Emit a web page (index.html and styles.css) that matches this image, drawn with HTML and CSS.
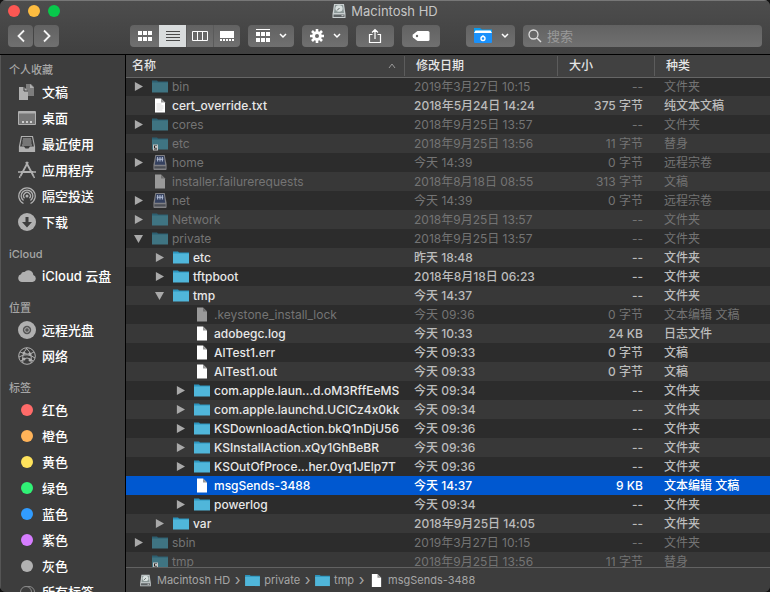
FILE: index.html
```html
<!DOCTYPE html>
<html lang="zh-CN">
<head>
<meta charset="utf-8">
<title>Macintosh HD</title>
<link rel="stylesheet" href="styles.css">
</head>
<body>
<svg class="sprite" aria-hidden="true">
  <symbol id="folder" viewBox="0 0 16 14"><path class="folder-tab" d="M0 1h5l1 1h10v3H0z"/><path class="folder-body" d="M0 3h16v10H0z"/></symbol>
  <symbol id="alias" viewBox="0 0 16 14"><path class="folder-tab" d="M0 1h5l1 1h10v3H0z"/><path class="folder-body" d="M0 3h16v10H0z"/><path fill="#c4c4c4" d="M1 8h5v6H1z"/><path d="M2 9h3v4H2z" fill="#222"/><path d="M2.500 12.500l2-2.500M3 10h1.700v2" stroke="#eee" fill="none" stroke-width=".8"/></symbol>
  <symbol id="file" viewBox="0 0 16 14"><path class="page" d="M3 0h6l4 4v10H3z"/><path class="fold" d="M9 0v4h4z"/></symbol>
  <symbol id="textfile" viewBox="0 0 16 14"><path class="page" d="M3 0h6l4 4v10H3z"/><path class="fold" d="M9 0v4h4z"/><path d="M4.500 5.500h5M4.500 7.500h7M4.500 9.500h7M4.500 11.500h6" stroke="#c9c9c9" stroke-width=".7"/></symbol>
  <symbol id="netdisk" viewBox="0 0 16 16"><path d="M3 0h10l2 10.500V15q0 1-1 1H2q-1 0-1-1v-4.500z" fill="#808084"/><path d="M3.800 1h8.400l1.300 9.500h-11z" fill="#35415f"/><path d="M5.500 2v5M8 2v5M10.500 2v5M4.500 4.500h7" stroke="#b4bed6" stroke-width="1.100"/><path d="M2 12h12v2.500H2z" fill="#4b4e55"/></symbol>
  <symbol id="disk" viewBox="0 0 14 16"><path d="M2 1h10l1.500 10v4H.5v-4z" fill="#c9cfd0"/><path d="M3 2h8l1 8H2z" fill="#8b9796"/><ellipse cx="7" cy="5.500" rx="3.600" ry="3.200" fill="#d9e0df"/><path d="M5 7.500l2.500-2.500" stroke="#59615f"/><path d="M1.500 11.500h11v2.500h-11z" fill="#5d6264"/><path d="M9.500 12.700h2" stroke="#d6d6d6"/></symbol>
  <symbol id="chev" viewBox="0 0 8 6"><path d="M1 1l3 3 3-3" fill="none" stroke="#fff" stroke-width="1.500"/></symbol>
</svg>

<main class="window">
  <header class="titlebar">
    <div class="caption">
      <div class="lights">
        <button class="light close" aria-label="关闭"></button>
        <button class="light minimize" aria-label="最小化"></button>
        <button class="light zoom" aria-label="缩放"></button>
      </div>
      <h1 class="title"><svg class="title-icon"><use href="#disk"/></svg>Macintosh HD</h1>
    </div>
    <div class="toolbar">
      <div class="nav">
        <button class="btn nav-btn" aria-label="后退"><svg width="10" height="14" viewBox="0 0 10 14"><path d="M8 1.500L2.500 7 8 12.500" fill="none" stroke="#f2f2f2" stroke-width="1.800"/></svg></button>
        <button class="btn nav-btn" aria-label="前进"><svg width="10" height="14" viewBox="0 0 10 14"><path d="M2 1.500L7.500 7 2 12.500" fill="none" stroke="#f2f2f2" stroke-width="1.800"/></svg></button>
      </div>
      <div class="views">
        <button class="seg" aria-label="图标"><svg width="16" height="12" viewBox="0 0 16 12"><path fill="#fff" d="M1 1h4v4H1zM6 1h4v4H6zM11 1h4v4h-4zM1 7h4v4H1zM6 7h4v4H6zM11 7h4v4h-4z"/></svg></button>
        <button class="seg selected" aria-label="列表"><svg width="16" height="12" viewBox="0 0 16 12"><path stroke="#4a4a4a" d="M1 1.500h14M1 4.500h14M1 7.500h14M1 10.500h14"/></svg></button>
        <button class="seg" aria-label="分栏"><svg width="16" height="12" viewBox="0 0 16 12"><path fill="none" stroke="#fff" d="M.5 1.500h15v9H.5zM5.500 1.500v9M10.500 1.500v9"/></svg></button>
        <button class="seg" aria-label="画廊"><svg width="16" height="12" viewBox="0 0 16 12"><path fill="#fff" d="M1 1h14v7H1zM1 9h2v2H1zM4 9h2v2H4zM7 9h2v2H7zM10 9h2v2h-2zM13 9h2v2h-2z"/></svg></button>
      </div>
      <button class="btn menu" aria-label="分组"><svg width="16" height="14" viewBox="0 0 16 14"><path fill="#fff" d="M1 0h14v1H1zM1 3h4v4H1zM6 3h4v4H6zM11 3h4v4h-4zM1 9h4v4H1zM6 9h4v4H6zM11 9h4v4h-4z"/></svg><svg class="chev"><use href="#chev"/></svg></button>
      <button class="btn menu" aria-label="操作"><svg width="16" height="16" viewBox="0 0 16 16"><g stroke="#fff" stroke-width="2.600"><path d="M8 1v14M1 8h14M3 3l10 10M13 3L3 13"/></g><circle cx="8" cy="8" r="4.800" fill="#fff"/><circle cx="8" cy="8" r="2" fill="#6b6b6b"/></svg><svg class="chev"><use href="#chev"/></svg></button>
      <button class="btn wide" aria-label="共享"><svg width="14" height="16" viewBox="0 0 14 16"><path d="M4.500 6.500h-3v8h11v-8h-3M7 11V1.500M4 4.500l3-3 3 3" fill="none" stroke="#fff" stroke-width="1.200"/></svg></button>
      <button class="btn wide" aria-label="标签"><svg width="18" height="12" viewBox="0 0 18 12"><path d="M5.500 1H16q1.500 0 1.500 1.500v7Q17.500 11 16 11H5.500L1 7.500q-1-1.500 0-3z" fill="#fff"/><circle cx="5" cy="6" r="1.200" fill="#6b6b6b"/></svg></button>
      <button class="btn menu cloud" aria-label="文件夹"><svg width="20" height="16" viewBox="0 0 20 16"><path d="M1 0h6l2 1.500h10V5H1z" fill="#0a9bf0"/><path d="M2.500 2.500h15l1.500 2.500H1z" fill="#fff"/><path d="M1 5h18v9q0 1-1 1H2q-1 0-1-1z" fill="#1a91fb"/><circle cx="10" cy="10.500" r="2" fill="none" stroke="#fff" stroke-width="1.400"/><path d="M10 7v2" stroke="#fff"/></svg><svg class="chev"><use href="#chev"/></svg></button>
      <label class="search"><svg width="14" height="14" viewBox="0 0 14 14"><circle cx="5.500" cy="5.500" r="4.500" fill="none" stroke="#ddd" stroke-width="1.300"/><path d="M9 9l4 4" stroke="#ddd" stroke-width="1.500"/></svg><input type="search" placeholder="搜索" aria-label="搜索"></label>
    </div>
  </header>

  <div class="body">
    <nav class="sidebar">
      <h2>个人收藏</h2>
      <a href="#"><svg viewBox="0 0 18 18"><path d="M8 1h5l3 3v9H8z" fill="#7d7d7d"/><path d="M12 1l4 4h-4z" fill="#b0b0b0"/><path d="M1 4h5l4 4v9H1z" fill="#b0b0b0"/><path d="M6 4v4h4" fill="none" stroke="#3d3d3d"/></svg>文稿</a>
      <a href="#"><svg viewBox="0 0 18 18"><path d="M.5 2.500h17v13H.5z" fill="#777" stroke="#b0b0b0"/><path d="M1 3h16v1.500H1z" fill="#b0b0b0"/><path d="M4 12h2v2H4zM8 12h2v2H8zM12 12h2v2h-2z" fill="#ccc"/></svg>桌面</a>
      <a href="#"><svg viewBox="0 0 18 18"><path d="M3.500 1.500h11l2 10v5h-15v-5z" fill="none" stroke="#b0b0b0" stroke-width="1.200"/><path d="M5 4h8M4.500 6h9M4.500 8h9M4 10h10" stroke="#b0b0b0" stroke-width="1.200"/><path d="M1.500 11.500h4.500l1.500 2h3l1.500-2h4.500v5h-15z" fill="#b0b0b0"/></svg>最近使用</a>
      <a href="#"><svg viewBox="0 0 18 18"><path d="M8 1l7.500 14M10 1L2.500 15M3 11h12" fill="none" stroke="#b0b0b0" stroke-width="1.800"/><path d="M0 11h3M15 11h3M2 15l-.5 2M15.500 15l1 2" stroke="#b0b0b0" stroke-width="1.500"/></svg>应用程序</a>
      <a href="#"><svg viewBox="0 0 18 18"><g fill="none" stroke="#b0b0b0" stroke-width="1.300"><path d="M5.500 16.500a8.200 8.200 0 1 1 7 0M5.500 13.500a5.800 5.800 0 1 1 7 0M6.500 11.200a3.400 3.400 0 1 1 5 0"/></g><circle cx="9" cy="9" r="1.500" fill="#b0b0b0"/></svg>隔空投送</a>
      <a href="#"><svg viewBox="0 0 18 18"><circle cx="9" cy="9" r="9" fill="#b0b0b0"/><path d="M7.500 4h3v5H14l-5 5.500L4 9h3.500z" fill="#3d3d3d"/></svg>下载</a>
      <h2>iCloud</h2>
      <a href="#"><svg viewBox="0 0 18 18"><path d="M4 15a4 4 0 0 1-1-7.800A3 3 0 0 1 6.500 5 5 5 0 0 1 15.300 8 3.600 3.600 0 0 1 14.500 15z" fill="#b0b0b0"/></svg>iCloud 云盘</a>
      <h2>位置</h2>
      <a href="#"><svg viewBox="0 0 18 18"><circle cx="9" cy="9" r="9" fill="#b0b0b0"/><circle cx="9" cy="9" r="4.200" fill="#555"/><circle cx="9" cy="9" r="2.300" fill="none" stroke="#b0b0b0"/></svg>远程光盘</a>
      <a href="#"><svg viewBox="0 0 18 18"><g fill="none" stroke="#b0b0b0"><circle cx="9" cy="9" r="8.300"/><path d="M9 1Q3 8 5 16M8 1q7 6 5 15M2 5q8 4 14 0M1 10q8-5 16 1M3 14Q9 8 15 14"/></g><g fill="#b0b0b0"><circle cx="6" cy="6" r="1.500"/><circle cx="12" cy="7" r="1.500"/><circle cx="6" cy="12" r="1.500"/><circle cx="12" cy="13" r="1.500"/></g></svg>网络</a>
      <h2>标签</h2>
      <a href="#"><i class="dot red"></i>红色</a>
      <a href="#"><i class="dot orange"></i>橙色</a>
      <a href="#"><i class="dot yellow"></i>黄色</a>
      <a href="#"><i class="dot green"></i>绿色</a>
      <a href="#"><i class="dot blue"></i>蓝色</a>
      <a href="#"><i class="dot purple"></i>紫色</a>
      <a href="#"><i class="dot gray"></i>灰色</a>
      <a href="#"><svg viewBox="0 0 18 18"><g fill="#3d3d3d" stroke="#8d8d8d"><circle cx="11" cy="9" r="5.500"/><circle cx="8" cy="9" r="5.500"/></g></svg>所有标签...</a>
    </nav>

    <section class="content">
      <div class="list">
        <table>
          <colgroup><col><col class="c-date"><col class="c-size"><col class="c-kind"></colgroup>
          <thead><tr>
            <th><span class="sort">名称<svg width="8" height="6" viewBox="0 0 8 6"><path d="M1 5l3-4 3 4" fill="none" stroke="#999"/></svg></span></th><th>修改日期</th><th>大小</th><th>种类</th>
          </tr></thead>
          <tbody>
            <tr class="dim"><td><div class="name"><button class="tri" aria-label="展开"></button><svg><use href="#folder"/></svg>bin</div></td><td>2019年3月27日 10:15</td><td>--</td><td>文件夹</td></tr>
            <tr><td><div class="name"><span class="tri-gap"></span><svg><use href="#textfile"/></svg>cert_override.txt</div></td><td>2018年5月24日 14:24</td><td>375 字节</td><td>纯文本文稿</td></tr>
            <tr class="dim"><td><div class="name"><button class="tri" aria-label="展开"></button><svg><use href="#folder"/></svg>cores</div></td><td>2018年9月25日 13:57</td><td>--</td><td>文件夹</td></tr>
            <tr class="dim"><td><div class="name"><span class="tri-gap"></span><svg><use href="#alias"/></svg>etc</div></td><td>2018年9月25日 13:56</td><td>11 字节</td><td>替身</td></tr>
            <tr class="dim"><td><div class="name"><button class="tri" aria-label="展开"></button><svg><use href="#netdisk"/></svg>home</div></td><td>今天 14:39</td><td>0 字节</td><td>远程宗卷</td></tr>
            <tr class="dim"><td><div class="name"><span class="tri-gap"></span><svg><use href="#file"/></svg>installer.failurerequests</div></td><td>2018年8月18日 08:55</td><td>313 字节</td><td>文稿</td></tr>
            <tr class="dim"><td><div class="name"><button class="tri" aria-label="展开"></button><svg><use href="#netdisk"/></svg>net</div></td><td>今天 14:39</td><td>0 字节</td><td>远程宗卷</td></tr>
            <tr class="dim"><td><div class="name"><button class="tri" aria-label="展开"></button><svg><use href="#folder"/></svg>Network</div></td><td>2018年9月25日 13:57</td><td>--</td><td>文件夹</td></tr>
            <tr class="dim"><td><div class="name"><button class="tri open" aria-label="收起"></button><svg><use href="#folder"/></svg>private</div></td><td>2018年9月25日 13:57</td><td>--</td><td>文件夹</td></tr>
            <tr><td><div class="name level-1"><button class="tri" aria-label="展开"></button><svg><use href="#folder"/></svg>etc</div></td><td>昨天 18:48</td><td>--</td><td>文件夹</td></tr>
            <tr><td><div class="name level-1"><button class="tri" aria-label="展开"></button><svg><use href="#folder"/></svg>tftpboot</div></td><td>2018年8月18日 06:23</td><td>--</td><td>文件夹</td></tr>
            <tr><td><div class="name level-1"><button class="tri open" aria-label="收起"></button><svg><use href="#folder"/></svg>tmp</div></td><td>今天 14:37</td><td>--</td><td>文件夹</td></tr>
            <tr class="dim"><td><div class="name level-2"><span class="tri-gap"></span><svg><use href="#file"/></svg>.keystone_install_lock</div></td><td>今天 09:36</td><td>0 字节</td><td>文本编辑 文稿</td></tr>
            <tr><td><div class="name level-2"><span class="tri-gap"></span><svg><use href="#file"/></svg>adobegc.log</div></td><td>今天 10:33</td><td>24 KB</td><td>日志文件</td></tr>
            <tr><td><div class="name level-2"><span class="tri-gap"></span><svg><use href="#file"/></svg>AlTest1.err</div></td><td>今天 09:33</td><td>0 字节</td><td>文稿</td></tr>
            <tr><td><div class="name level-2"><span class="tri-gap"></span><svg><use href="#file"/></svg>AlTest1.out</div></td><td>今天 09:33</td><td>0 字节</td><td>文稿</td></tr>
            <tr><td><div class="name level-2"><button class="tri" aria-label="展开"></button><svg><use href="#folder"/></svg>com.apple.laun...d.oM3RffEeMS</div></td><td>今天 09:34</td><td>--</td><td>文件夹</td></tr>
            <tr><td><div class="name level-2"><button class="tri" aria-label="展开"></button><svg><use href="#folder"/></svg>com.apple.launchd.UCICz4x0kk</div></td><td>今天 09:34</td><td>--</td><td>文件夹</td></tr>
            <tr><td><div class="name level-2"><button class="tri" aria-label="展开"></button><svg><use href="#folder"/></svg>KSDownloadAction.bkQ1nDjU56</div></td><td>今天 09:36</td><td>--</td><td>文件夹</td></tr>
            <tr><td><div class="name level-2"><button class="tri" aria-label="展开"></button><svg><use href="#folder"/></svg>KSInstallAction.xQy1GhBeBR</div></td><td>今天 09:36</td><td>--</td><td>文件夹</td></tr>
            <tr><td><div class="name level-2"><button class="tri" aria-label="展开"></button><svg><use href="#folder"/></svg>KSOutOfProce...her.0yq1JElp7T</div></td><td>今天 09:36</td><td>--</td><td>文件夹</td></tr>
            <tr class="selected"><td><div class="name level-2"><span class="tri-gap"></span><svg><use href="#file"/></svg>msgSends-3488</div></td><td>今天 14:37</td><td>9 KB</td><td>文本编辑 文稿</td></tr>
            <tr><td><div class="name level-2"><button class="tri" aria-label="展开"></button><svg><use href="#folder"/></svg>powerlog</div></td><td>今天 09:34</td><td>--</td><td>文件夹</td></tr>
            <tr><td><div class="name level-1"><button class="tri" aria-label="展开"></button><svg><use href="#folder"/></svg>var</div></td><td>2018年9月25日 14:05</td><td>--</td><td>文件夹</td></tr>
            <tr class="dim"><td><div class="name"><button class="tri" aria-label="展开"></button><svg><use href="#folder"/></svg>sbin</div></td><td>2019年3月27日 10:15</td><td>--</td><td>文件夹</td></tr>
            <tr class="dim"><td><div class="name"><span class="tri-gap"></span><svg><use href="#alias"/></svg>tmp</div></td><td>2018年9月25日 13:56</td><td>11 字节</td><td>替身</td></tr>
          </tbody>
        </table>
      </div>
      <footer class="pathbar">
        <a href="#"><svg><use href="#disk"/></svg>Macintosh HD</a><span class="sep">›</span>
        <a href="#"><svg><use href="#folder"/></svg>private</a><span class="sep">›</span>
        <a href="#"><svg><use href="#folder"/></svg>tmp</a><span class="sep">›</span>
        <a href="#"><svg><use href="#file"/></svg>msgSends-3488</a>
      </footer>
    </section>
  </div>
</main>
</body>
</html>
```
FILE: styles.css
```css
* { box-sizing: border-box; }

body {
  margin: 0;
  background: #111;
  color: #e6e6e6;
  font: 500 12px/18px Inter, "Noto Sans CJK SC", sans-serif;
  font-variant-ligatures: no-contextual;
}

button { padding: 0; border: 0; font: inherit; color: inherit; }
a { color: inherit; text-decoration: none; }
h1, h2 { margin: 0; font: inherit; }
.sprite { display: none; }

.folder-tab { fill: var(--tab, #2b94bd); }
.folder-body { fill: var(--folder, #50b6da); }
.page { fill: var(--page, #fff); }
.fold { fill: var(--fold, #999); }

.window {
  display: flex;
  flex-direction: column;
  height: 100vh;
  overflow: hidden;
  border-radius: 6px;
  background: #3d3d3d;
}

.titlebar {
  flex: none;
  border-bottom: 1px solid #000;
  box-shadow: inset 0 1px #777;
  background: linear-gradient(#4d4d4d, #404040);
}

.caption {
  display: grid;
  grid-template-columns: 1fr auto 1fr;
  align-items: center;
  height: 22px;
  padding: 0 8px;
}
.lights { display: flex; gap: 8px; }
.light { width: 12px; height: 12px; border-radius: 50%; }
.close { background: #fc5753; }
.minimize { background: #fdbc40; }
.zoom { background: #08c84b; }
.title {
  display: flex;
  align-items: center;
  gap: 5px;
  color: #c6c6c6;
  font-size: 13px;
  font-weight: 400;
}
.title-icon { width: 14px; height: 16px; }

.toolbar { display: flex; gap: 8px; padding: 3px 8px 7px; }
.btn, .views, .search {
  height: 22px;
  border-radius: 4px;
  background: linear-gradient(#626262, #707070);
}
.btn { display: flex; align-items: center; justify-content: center; }
.nav { display: flex; gap: 1px; margin-right: 63px; }
.nav-btn { width: 25px; }
.views { display: flex; overflow: hidden; }
.seg {
  display: flex;
  align-items: center;
  justify-content: center;
  width: 29px;
  background: none;
}
.seg + .seg { width: 27px; border-left: 1px solid #5a5a5a; }
.seg.selected { border-left: 0; background: #d9dcdd; }
.menu { width: 46px; gap: 8px; }
.chev { width: 8px; height: 6px; }
.wide { width: 38px; }
.cloud { width: 49px; margin-left: 18px; }
.search {
  display: flex;
  flex: 1;
  align-items: center;
  gap: 5px;
  padding: 0 5px;
  min-width: 0;
}
.search input {
  flex: 1;
  min-width: 0;
  padding: 0;
  border: 0;
  outline: 0;
  background: none;
  color: #fff;
  font: inherit;
  font-size: 13px;
  font-weight: 400;
}
.search input::placeholder { color: #999; }

.body { display: flex; flex: 1; min-height: 0; }

.sidebar {
  flex: none;
  width: 126px;
  overflow: hidden;
  border-right: 1px solid #000;
  border-left: 1px solid #555;
  background: #3d3d3d;
}
.sidebar h2 {
  padding: 10px 0 0 8px;
  color: #a6a6a6;
  font-size: 11px;
}
.sidebar h2:first-child { padding-top: 6px; }
.sidebar a {
  display: flex;
  align-items: center;
  gap: 6px;
  height: 26px;
  padding-left: 17px;
  color: #fff;
  font-size: 13px;
  white-space: nowrap;
}
.sidebar svg { flex: none; width: 18px; height: 18px; }
.dot { width: 12px; height: 12px; margin: 0 3px; border-radius: 50%; }
.red { background: #ff6b69; }
.orange { background: #ffb359; }
.yellow { background: #ffe35c; }
.green { background: #30f276; }
.blue { background: #319cff; }
.purple { background: #d67dff; }
.gray { background: #b1b1b1; }

.content { display: flex; flex: 1; flex-direction: column; min-width: 0; }
.list { flex: 1; min-height: 0; overflow: hidden; background: #2c2c2c; }

table {
  width: 100%;
  border-collapse: separate;
  border-spacing: 0;
  table-layout: fixed;
}
.c-date { width: 153px; }
.c-size { width: 97px; }
.c-kind { width: 116px; }

th {
  height: 22px;
  padding: 0 12px;
  background: #414141;
  box-shadow: 0 1px #666;
  background-image: linear-gradient(#5c5c5c, #5c5c5c);
  background-position: 0 1px;
  background-repeat: no-repeat;
  background-size: 1px 20px;
  font-weight: 500;
  text-align: left;
}
th:first-child { padding: 0 8px 0 6px; background-image: none; }
.sort { display: flex; align-items: center; justify-content: space-between; }

td {
  height: 19px;
  padding: 0 10px;
  overflow: hidden;
  color: #bcbcbc;
  line-height: 19px;
  white-space: nowrap;
}
td:first-child { padding: 0; color: #e8e8e8; }
td:nth-child(3) { padding-right: 11px; text-align: right; }
tbody tr:nth-child(even) { background: #383838; }
tbody tr.selected { background: #0058d0; }
tbody .selected td { color: #fff; }
tbody .dim td { color: #747474; font-weight: 400; }
.dim {
  --tab: #2c5f70;
  --folder: #3f7482;
  --page: #999;
  --fold: #707070;
}

.name { display: flex; align-items: center; padding-left: 8px; }
.level-1 { padding-left: 29px; }
.level-2 { padding-left: 50px; }
.name svg { flex: none; width: 16px; height: 15px; margin: 0 4px 0 9px; }
.tri, .tri-gap { flex: none; width: 9px; height: 9px; }
.tri { background: #a9a9a9; clip-path: polygon(10% 0, 100% 50%, 10% 100%); }
.tri.open { clip-path: polygon(0 10%, 100% 10%, 50% 100%); }

.pathbar {
  display: flex;
  flex: none;
  align-items: center;
  height: 25px;
  padding-left: 12px;
  border-top: 1px solid #626262;
  background: #3d3d3d;
  color: #a6a6a6;
  font-size: 11px;
  font-weight: 400;
}
.pathbar a { display: flex; align-items: center; gap: 4px; }
.pathbar svg { width: 15px; height: 13px; }
.sep { width: 15px; text-align: center; font-size: 15px; }
```
